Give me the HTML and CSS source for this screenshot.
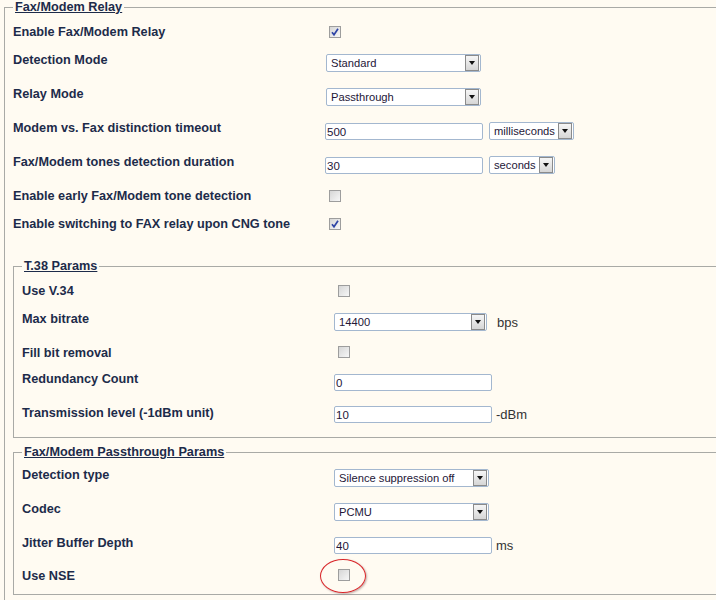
FILE: index.html
```html
<html>
<head>
    <title>Fax/Modem Relay</title>
    <link rel="stylesheet" href="styles.css">
</head>
<body>
<fieldset class="group outer">
    <legend>Fax/Modem Relay</legend>
    <div class="row short">
        <div class="label">Enable Fax/Modem Relay</div>
        <div class="field"><input type="checkbox" checked></div>
    </div>
    <div class="row">
        <div class="label">Detection Mode</div>
        <div class="field">
            <span class="select wide"><select><option>Standard</option><option>Extended</option></select></span>
        </div>
    </div>
    <div class="row">
        <div class="label">Relay Mode</div>
        <div class="field">
            <span class="select wide"><select><option>Passthrough</option><option>T.38</option></select></span>
        </div>
    </div>
    <div class="row">
        <div class="label">Modem vs. Fax distinction timeout</div>
        <div class="field">
            <input type="text" class="text" value="500">
            <span class="select ms"><select><option>milliseconds</option></select></span>
        </div>
    </div>
    <div class="row">
        <div class="label">Fax/Modem tones detection duration</div>
        <div class="field">
            <input type="text" class="text" value="30">
            <span class="select sec"><select><option>seconds</option></select></span>
        </div>
    </div>
    <div class="row short">
        <div class="label">Enable early Fax/Modem tone detection</div>
        <div class="field"><input type="checkbox"></div>
    </div>
    <div class="row short">
        <div class="label">Enable switching to FAX relay upon CNG tone</div>
        <div class="field"><input type="checkbox" checked></div>
    </div>

    <fieldset class="group inner t38">
        <legend>T.38 Params</legend>
        <div class="row short">
            <div class="label">Use V.34</div>
            <div class="field"><input type="checkbox"></div>
        </div>
        <div class="row">
            <div class="label">Max bitrate</div>
            <div class="field">
                <span class="select rate"><select><option>14400</option><option>9600</option></select></span>
                <span class="unit">bps</span>
            </div>
        </div>
        <div class="row shorter">
            <div class="label">Fill bit removal</div>
            <div class="field"><input type="checkbox"></div>
        </div>
        <div class="row">
            <div class="label">Redundancy Count</div>
            <div class="field"><input type="text" class="text" value="0"></div>
        </div>
        <div class="row mid">
            <div class="label">Transmission level (-1dBm unit)</div>
            <div class="field">
                <input type="text" class="text" value="10">
                <span class="unit tight">-dBm</span>
            </div>
        </div>
    </fieldset>

    <fieldset class="group inner pass">
        <legend>Fax/Modem Passthrough Params</legend>
        <div class="row">
            <div class="label">Detection type</div>
            <div class="field">
                <span class="select wide"><select><option>Silence suppression off</option></select></span>
            </div>
        </div>
        <div class="row">
            <div class="label">Codec</div>
            <div class="field">
                <span class="select wide"><select><option>PCMU</option><option>PCMA</option></select></span>
            </div>
        </div>
        <div class="row jitter">
            <div class="label">Jitter Buffer Depth</div>
            <div class="field">
                <input type="text" class="text" value="40">
                <span class="unit tight">ms</span>
            </div>
        </div>
        <div class="row shorter">
            <div class="label">Use NSE</div>
            <div class="field marked">
                <input type="checkbox">
                <span class="circle"></span>
            </div>
        </div>
    </fieldset>
</fieldset>
</body>
</html>
```

FILE: styles.css
```css
html {
    overflow: hidden;
}
body {
    margin: 0;
    padding: 0 0 0 4px;
    background: #fffbf2;
    font-family: "Liberation Sans", Arial, sans-serif;
    font-size: 12px;
    color: #1d2b4a;
}
.group {
    border: 1px solid #a9aaa6;
    margin: 0;
    padding: 3px 0 1px 8px;
    min-width: 0;
}
.group legend {
    padding: 0 2px;
    font-weight: bold;
    font-size: 12.7px;
    line-height: 15px;
    text-decoration: underline;
    color: #1d2b4a;
}
.outer {
    width: 780px;
    padding-bottom: 40px;
}
.t38 {
    margin-top: 21px;
    padding-bottom: 7px;
}
.pass {
    margin-top: 7px;
    padding-top: 1px;
    padding-bottom: 6px;
}
.row {
    display: flex;
    height: 34px;
}
.row.short {
    height: 28px;
}
.row.shorter {
    height: 26px;
}
.row.mid {
    height: 31px;
}
.row.jitter {
    height: 33px;
}
.label {
    width: 312px;
    flex: none;
    padding-top: 7px;
    line-height: 14px;
    font-size: 12.7px;
    font-weight: bold;
}
.field {
    display: flex;
    align-items: center;
}
.marked {
    position: relative;
}
.circle {
    position: absolute;
    left: -14px;
    top: -3px;
    width: 44px;
    height: 32px;
    border: 1px solid #d8262a;
    border-radius: 50%;
    box-shadow: 1px 1px 2px rgba(120, 80, 80, 0.45);
}
input[type="checkbox"] {
    appearance: none;
    -webkit-appearance: none;
    width: 12px;
    height: 12px;
    margin: 0 0 0 4px;
    border: 1px solid #9d9d9d;
    background: linear-gradient(135deg, #d6d6d6, #f7f7f7);
}
input[type="checkbox"]:checked {
    background: url("data:image/svg+xml,%3Csvg xmlns='http://www.w3.org/2000/svg' width='10' height='10'%3E%3Cpath d='M2 5.2 L4 7.8 L8 1.8' fill='none' stroke='%232f45a6' stroke-width='1.7'/%3E%3C/svg%3E") center no-repeat, linear-gradient(135deg, #d6d6d6, #f7f7f7);
}
.text {
    width: 158px;
    height: 17px;
    box-sizing: border-box;
    margin: 0;
    padding: 1px 1px 0 1px;
    border: 1px solid #a3b7cf;
    border-radius: 2px;
    background: #fff;
    font-family: "Liberation Sans", Arial, sans-serif;
    font-size: 11.5px;
    color: #241637;
}
.select {
    position: relative;
    display: inline-block;
    height: 18px;
}
.select select {
    appearance: none;
    -webkit-appearance: none;
    width: 100%;
    height: 18px;
    box-sizing: border-box;
    margin: 0;
    padding: 0 0 0 4px;
    border: 1px solid #a3b7cf;
    border-radius: 2px;
    background: #fff;
    font-family: "Liberation Sans", Arial, sans-serif;
    font-size: 11.2px;
    color: #241637;
}
.select::after {
    content: "";
    position: absolute;
    right: 2px;
    top: 1px;
    width: 12px;
    height: 14px;
    border: 1px solid #8b8b8b;
    background: linear-gradient(#f6f6f6, #d6d6d6);
    pointer-events: none;
}
.select::before {
    content: "";
    position: absolute;
    right: 6px;
    top: 7px;
    border-left: 3.5px solid transparent;
    border-right: 3.5px solid transparent;
    border-top: 4px solid #111;
    z-index: 1;
    pointer-events: none;
}
.wide {
    width: 155px;
    margin-left: 1px;
}
.t38 .wide,
.pass .wide {
    margin-left: 0;
}
.rate {
    width: 153px;
}
.ms {
    width: 85px;
    margin-left: 6px;
}
.sec {
    width: 66px;
    margin-left: 6px;
}
.unit {
    margin-left: 10px;
    font-size: 13px;
    color: #333;
}
.unit.tight {
    margin-left: 4px;
}
```
